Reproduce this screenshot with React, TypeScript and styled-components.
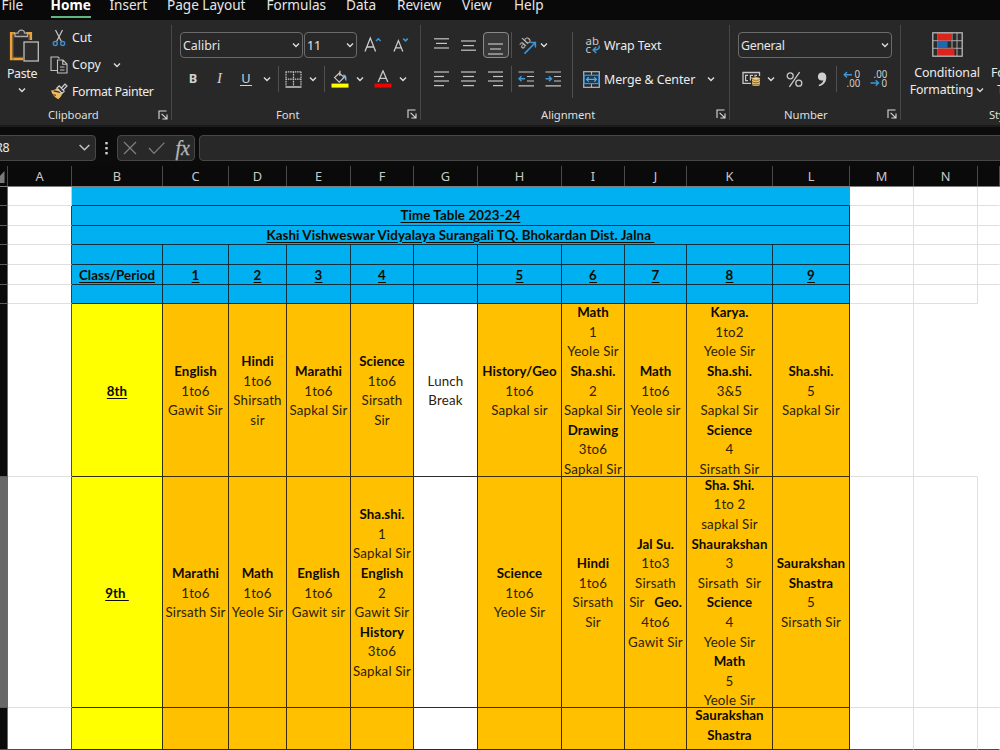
import React from 'react';
import styled, { createGlobalStyle } from 'styled-components';

const Global = createGlobalStyle`
  * { box-sizing: border-box; }
  html, body { margin: 0; padding: 0; background: #0a0a0a; overflow: hidden; }
`;

const ui = `"Noto Sans", "Open Sans", sans-serif`;
const sheet = `Lato, "Open Sans", sans-serif`;

const Window = styled.div`
  width: 1000px;
  height: 750px;
  overflow: hidden;
  display: flex;
  flex-direction: column;
  background: #0a0a0a;
  color: #ececec;
  font-family: ${ui};
`;

/* ---------- tabs ---------- */
const TabBar = styled.nav`
  display: flex;
  flex: none;
  height: 20px;
  background: #090909;
`;
const Tab = styled.div<{ $w: number; $ls?: number; $active?: boolean }>`
  width: ${p => p.$w}px;
  height: 18px;
  flex: none;
  white-space: nowrap;
  font-size: 13.6px;
  line-height: 20px;
  margin-top: -5px;
  letter-spacing: ${p => p.$ls ?? -0.02}px;
  font-weight: ${p => (p.$active ? 700 : 400)};
  color: ${p => (p.$active ? '#ffffff' : '#e6e6e6')};
  span { display: inline-block; height: 23px; border-bottom: ${p => (p.$active ? '2px solid #5fb884' : '0')}; }
`;

/* ---------- ribbon ---------- */
const Ribbon = styled.div`
  display: flex;
  flex: none;
  height: 106px;
  background: #282828;
  border-bottom: 1px solid #1a1a1a;
  overflow: hidden;
`;
const Group = styled.section<{ $w: number; $pl?: number }>`
  flex: none;
  width: ${p => p.$w}px;
  padding: 12px 0 0 ${p => p.$pl ?? 0}px;
  display: flex;
  flex-direction: column;
`;
const GroupEdge = styled.i`
  flex: none;
  width: 1px;
  height: 95px;
  margin-top: 5px;
  background: #484848;
`;
const Row = styled.div`
  display: flex;
  align-items: center;
  height: 26px;
  margin-bottom: 8px;
  flex: none;
`;
const Slot = styled.div<{ $w: number; $h?: number }>`
  width: ${p => p.$w}px;
  flex: none;
  height: ${p => p.$h ?? 26}px;
  display: flex;
  align-items: center;
  justify-content: center;
`;
const Gap = styled.div<{ $w?: number; $h?: number }>`
  width: ${p => p.$w ?? 1}px;
  height: ${p => p.$h ?? 0}px;
  flex: none;
`;
const Bar = styled.i<{ $h?: number }>`
  width: 1px;
  height: ${p => p.$h ?? 26}px;
  background: #505050;
`;
const Footer = styled.div<{ $pl: number }>`
  display: flex;
  justify-content: space-between;
  align-items: center;
  height: 18px;
  margin-top: auto;
  margin-bottom: 2px;
  padding: 0 3px 0 ${p => p.$pl}px;
  font-size: 11.3px;
  letter-spacing: -0.08px;
  color: #dedede;
`;
const Select = styled.div<{ $w: number; $ls?: number }>`
  width: ${p => p.$w}px;
  height: 26px;
  flex: none;
  border: 1px solid #6a6a6a;
  border-radius: 4px;
  padding: 0 2px 0 2px;
  display: flex;
  align-items: center;
  justify-content: space-between;
  font-size: 12.4px;
  letter-spacing: ${p => p.$ls ?? 0}px;
  color: #e4e4e4;
`;
const Text = styled.span<{ $s?: number; $ls?: number }>`
  font-size: ${p => p.$s ?? 12.4}px;
  letter-spacing: ${p => p.$ls ?? -0.1}px;
  white-space: pre;
  line-height: 17px;
`;
const Mark = styled.span<{ $bold?: boolean; $italic?: boolean; $under?: boolean }>`
  font-family: ${p => (p.$italic ? '"Liberation Serif", serif' : ui)};
  font-size: ${p => (p.$italic ? 15 : 12.8)}px;
  font-weight: ${p => (p.$bold ? 700 : 400)};
  font-style: ${p => (p.$italic ? 'italic' : 'normal')};
  line-height: 13px;
  color: #d2d2d2;
  margin-top: -1px;
  padding: 0 1px;
  border-bottom: ${p => (p.$under ? '1px solid #d2d2d2' : '0')};
`;
const Pressed = styled.div`
  width: 26px;
  height: 26px;
  flex: none;
  border: 1px solid #8a8a8a;
  border-radius: 4px;
  background: #383838;
  display: flex;
  align-items: center;
  justify-content: center;
  padding-top: 5px;
`;
const ClipRow = styled.div`
  display: flex;
  height: 82px;
`;
const PasteButton = styled.div`
  width: 44px;
  display: flex;
  flex-direction: column;
  align-items: center;
  svg { flex: none; }
`;
const PasteArt = styled.div`
  height: 34px;
  margin: -3px 0 2px 4px;
`;
const ClipList = styled.div`
  display: flex;
  flex-direction: column;
  padding: 0 0 0 6px;
  margin-top: -8px;
`;
const ClipItem = styled.div`
  height: 27px;
  display: flex;
  align-items: center;
  gap: 4px;
`;
const AlignBody = styled.div`
  display: flex;
  height: 68px;
`;
const Col = styled.div`
  display: flex;
  flex-direction: column;
  align-items: flex-start;
`;
const CondButton = styled.div`
  width: 74px;
  margin-left: 9px;
  display: flex;
  flex-direction: column;
  align-items: center;
`;
const FormatTable = styled.div`
  display: flex;
  flex-direction: column;
  padding-left: 7px;
`;
const StyleArea = styled.div`
  display: flex;
  height: 68px;
`;

const Chevron = ({ s = 8, c = '#dcdcdc', w = 1.4 }: { s?: number; c?: string; w?: number }) => (
  <svg width={s} height={s} viewBox="0 0 8 8" fill="none" stroke={c} strokeWidth={w}>
    <path d="M1 2.4 L4 5.4 L7 2.4" />
  </svg>
);
const Launcher = () => (
  <svg width="10" height="10" viewBox="0 0 10 10" fill="none" stroke="#dcdcdc" strokeWidth="1.1">
    <path d="M8.5 1 H1 V9 M3.6 3.8 L8.6 8.6 M9 4.4 V9 H4.4" />
  </svg>
);
const Lines = ({ rows, w = 16, h = 15 }: { rows: number[][]; w?: number; h?: number }) => (
  <svg width={w} height={h} viewBox={`0 0 ${w} ${h}`} stroke="#c4c4c4" strokeWidth="1.2">
    {rows.map(([x1, x2, y], i) => <line key={i} x1={x1} x2={x2} y1={y} y2={y} />)}
  </svg>
);
const PasteIcon = () => (
  <svg width="32" height="34" viewBox="0 0 32 34" fill="none">
    <path d="M7 4.2 H3.2 V30 H15" stroke="#e9a23c" strokeWidth="2.6" />
    <path d="M18 4.2 H22.8 V11" stroke="#e9a23c" strokeWidth="2.6" />
    <path d="M5 3.5 V31 M4.6 28.3 H15 M21 6 V11" stroke="#8a6a38" strokeWidth=".8" />
    <path d="M7 7.5 V4.2 H10 C10 .2 16.5 .2 16.5 4.2 H19.5 V7.5 Z" fill="#333" stroke="#a9a9a9" strokeWidth="1.3" />
    <rect x="16" y="13" width="14.3" height="19" fill="#2c2c2c" stroke="#bdbdbd" strokeWidth="1.3" />
  </svg>
);
const CutIcon = () => (
  <svg width="18" height="18" viewBox="0 0 18 18" fill="none">
    <path d="M5.5 1 L11.4 12.6 M12.5 1 L6.6 12.6" stroke="#c8c8c8" strokeWidth="1.2" />
    <circle cx="5.3" cy="14.5" r="2" stroke="#3b8ed0" strokeWidth="1.4" />
    <circle cx="12.7" cy="14.5" r="2" stroke="#3b8ed0" strokeWidth="1.4" />
  </svg>
);
const CopyIcon = () => (
  <svg width="18" height="18" viewBox="0 0 18 18" fill="none" stroke="#c0c0c0" strokeWidth="1.1">
    <path d="M7 14.5 H1 V1 H8 L9.5 2.5" />
    <path d="M7.5 4 H13 L17 8 V17 H7.5 Z M12.7 4.2 V8.2 H17 M10 11 H14.5 M10 14 H14.5" />
  </svg>
);
const PainterIcon = () => (
  <svg width="18" height="17" viewBox="0 0 18 17" fill="none">
    <path d="M1 7.5 C3.5 7.5 5.5 6.5 7 5 L12.3 10.5 C11.5 13 10.3 14.8 8.2 16.2 C5 14.5 2 11.5 1 7.5 Z" fill="#edb95c" />
    <path d="M3.6 7.9 L10.5 9.4" stroke="#282828" strokeWidth="1.1" />
    <path d="M3.4 11.6 L6 12.4" stroke="#282828" strokeWidth=".9" />
    <path d="M7 5 L9.2 2.8 L14.2 8.3 L12 10.5 Z M11.4 5 L15 1 L17 3 L13.2 6.8" stroke="#d0d0d0" strokeWidth="1.2" fill="#282828" />
  </svg>
);
const GrowIcon = ({ up }: { up?: boolean }) => (
  <svg width="18" height="18" viewBox="0 0 18 18" fill="none">
    {up
      ? <><path d="M1 15.4 L6.3 2 L11.6 15.4 M2.8 11 H9.8" stroke="#cacaca" strokeWidth="1.3" /><path d="M12 5 L14.3 2.7 L16.6 5" stroke="#3b97d8" strokeWidth="1.5" /></>
      : <><path d="M2 15.4 L6.4 4.6 L10.8 15.4 M3.5 11.8 H9.3" stroke="#cacaca" strokeWidth="1.3" /><path d="M11.2 2.6 L13.5 4.9 L15.8 2.6" stroke="#3b97d8" strokeWidth="1.5" /></>}
  </svg>
);
const BordersIcon = () => (
  <svg width="17" height="17" viewBox="0 0 17 17" fill="none" stroke="#c8c8c8">
    <path d="M.6 .8 H16.4 M.6 8.2 H16.4 M1 .8 V15 M8.5 .8 V15 M16 .8 V15" strokeDasharray="1.5 .8" strokeWidth="1.2" />
    <path d="M.5 16 H16.5" strokeWidth="1.5" />
  </svg>
);
const FillIcon = () => (
  <svg width="18" height="18" viewBox="0 0 18 18" fill="none">
    <path d="M8 2.6 L13 7.4 L8.2 12.2 L3.6 7.6 L9 2.4 V.8 M8.8 2 V6" stroke="#c8c8c8" strokeWidth="1.2" />
    <path d="M12 4.5 C15.8 4.5 15.8 8 15.3 11.6 C13.6 9.6 14 7.5 12.5 6.5 Z" fill="#7db5e0" />
    <rect x=".5" y="13.6" width="17" height="4" fill="#ffff00" />
  </svg>
);
const FontColorIcon = () => (
  <svg width="18" height="18" viewBox="0 0 18 18" fill="none">
    <path d="M4.2 12 L9 .8 L13.8 12 M5.8 8.4 H12.2" stroke="#c8c8c8" strokeWidth="1.3" />
    <rect x=".5" y="13.6" width="17" height="4" fill="#f00000" />
  </svg>
);
const OrientIcon = () => (
  <svg width="20" height="20" viewBox="0 0 20 20" fill="none">
    <text x="0" y="0" transform="translate(5.6 14.4) rotate(-45)" fontFamily="Noto Sans" fontSize="11" fill="#c8c8c8">ab</text>
    <path d="M7.5 18.6 L18 8 M13.4 7.6 H18.4 V12.6" stroke="#3b97d8" strokeWidth="1.5" />
  </svg>
);
const WrapIcon = () => (
  <svg width="16" height="20" viewBox="0 0 16 20" fill="none">
    <text x="0.5" y="10" fontFamily="Noto Sans" fontSize="11.4" fill="#c8c8c8">ab</text>
    <text x="0.5" y="18" fontFamily="Noto Sans" fontSize="11.4" fill="#c8c8c8">c</text>
    <path d="M14 10.6 C15 13.6 13 15 8.5 15 M11.2 12 L8.2 15 L11.2 18" stroke="#3b97d8" strokeWidth="1.5" />
  </svg>
);
const MergeIcon = () => (
  <svg width="17" height="17" viewBox="0 0 17 17" fill="none">
    <rect x=".7" y=".7" width="15.6" height="15.6" stroke="#b8b8b8" strokeWidth="1.2" />
    <path d="M8.5 1 V4 M8.5 13 V16" stroke="#b8b8b8" strokeWidth="1.1" />
    <rect x="1.2" y="4.2" width="14.6" height="8.4" fill="#1c3a52" stroke="#3b97d8" strokeWidth="1.2" />
    <path d="M3.5 8.4 H13.5 M5.8 6.2 L3.6 8.4 L5.8 10.6 M11.2 6.2 L13.4 8.4 L11.2 10.6" stroke="#56aee8" strokeWidth="1.2" />
  </svg>
);
const IndentIcon = ({ right }: { right?: boolean }) => (
  <svg width="17" height="16" viewBox="0 0 17 16" fill="none">
    <path d="M.5 1 H16 M9 5.5 H16 M9 10 H16 M.5 14.8 H16" stroke="#c4c4c4" strokeWidth="1.2" />
    <path d={right ? 'M.5 7.8 H6.5 M4 5.3 L6.5 7.8 L4 10.3' : 'M1 7.8 H7 M3.5 5.3 L1 7.8 L3.5 10.3'} stroke="#3b97d8" strokeWidth="1.5" />
  </svg>
);
const MoneyIcon = () => (
  <svg width="19" height="16" viewBox="0 0 19 16" fill="none">
    <path d="M9 12.4 H1 V1.5 H17.5 V5" stroke="#c8c8c8" strokeWidth="1.3" />
    <path d="M6 4.4 H3.6 V9.6 H6 M11 4.4 H8.4 V9.6 M8.4 7 H10.5 M13 6 V4.4 H15" stroke="#c8c8c8" strokeWidth="1.2" />
    <path d="M10 7.8 V13.4 C10 15.6 18 15.6 18 13.4 V7.8 Z" fill="#e8be6c" />
    <ellipse cx="14" cy="7.6" rx="4" ry="1.7" fill="#f1d596" stroke="#5a451c" strokeWidth=".6" />
    <path d="M10 10.5 C11 12.2 17 12.2 18 10.5 M10 13 C11 14.2 17 14.2 18 13" stroke="#6a5220" strokeWidth=".8" />
  </svg>
);
const PercentIcon = () => (
  <svg width="17" height="17" viewBox="0 0 17 17" fill="none" stroke="#c8c8c8" strokeWidth="1.3">
    <circle cx="4.2" cy="4.8" r="3" /><circle cx="12.8" cy="12.2" r="3" /><path d="M13.6 1.2 L3.4 15.8" />
  </svg>
);
const CommaIcon = () => (
  <svg width="10" height="15" viewBox="0 0 10 15">
    <path d="M5 .6 C8 .6 9.3 2.8 9.3 5.4 C9.3 9.8 6.6 13 2.2 14.2 L1.6 13 C4.4 12 6 10.4 6.3 8.3 C3.2 9.3 .9 7.3 .9 4.7 C.9 2.2 2.6 .6 5 .6 Z" fill="#cfcfcf" />
  </svg>
);
const DecimalIcon = ({ more }: { more?: boolean }) => (
  <svg width="18" height="20" viewBox="0 0 18 20" fill="none">
    <g fontFamily="Noto Sans" fontSize="11" fill="#cfcfcf">
      {more
        ? <><text x="11.6" y="9" textLength="5.6" lengthAdjust="spacingAndGlyphs">0</text><text x="3.6" y="18.2" textLength="13.6" lengthAdjust="spacingAndGlyphs">.00</text></>
        : <><text x="3.6" y="9" textLength="13.6" lengthAdjust="spacingAndGlyphs">.00</text><text x="11.6" y="18.2" textLength="5.6" lengthAdjust="spacingAndGlyphs">0</text></>}
    </g>
    <path d={more ? 'M1.2 5.8 H9 M4 3 L1.2 5.8 L4 8.6' : 'M.5 14 H8.5 M5.7 11.2 L8.5 14 L5.7 16.8'} stroke="#3b97d8" strokeWidth="1.4" />
  </svg>
);
const CondIcon = () => (
  <svg width="31" height="25" viewBox="0 0 31 25">
    <rect x="1" y="1" width="29" height="23" fill="#2b2b2b" />
    <path d="M20 1 V24 M25 1 V24 M6 1 V24 M1 8.7 H30 M1 16.3 H30" stroke="#a8a8a8" strokeWidth="1" />
    <rect x="6" y="1" width="13.5" height="7.4" fill="#dc241c" />
    <rect x="6" y="9" width="9.5" height="7" fill="#1c68b4" />
    <rect x="6" y="16.6" width="16.5" height="7.4" fill="#dc241c" />
    <rect x=".8" y=".8" width="29.4" height="23.4" fill="none" stroke="#c4c4c4" strokeWidth="1.2" />
  </svg>
);

/* ---------- formula bar ---------- */
const FormulaBar = styled.div`
  display: flex;
  flex: none;
  height: 40px;
  padding-top: 8px;
  background: #0b0b0b;
  border-top: 1px solid #1c1c1c;
  overflow: hidden;
`;
const Field = styled.div<{ $w: number; $ml: number; $pl?: number }>`
  flex: none;
  width: ${p => p.$w}px;
  height: 26px;
  margin-left: ${p => p.$ml}px;
  background: #282828;
  border: 1px solid #474747;
  border-radius: 4px;
  display: flex;
  align-items: center;
  justify-content: space-between;
  padding: 0 4px 1px ${p => p.$pl ?? 5}px;
  font-size: 12.4px;
`;
const Dots = styled.div`
  width: 22px;
  height: 25px;
  display: flex;
  flex: none;
  align-items: center;
  justify-content: center;
`;
const Fx = styled.span`
  font-family: "Liberation Serif", serif;
  font-style: italic;
  font-size: 20px;
  line-height: 20px;
  color: #b4b4b4;
  -webkit-text-stroke: 0.3px #b4b4b4;
`;

/* ---------- sheet ---------- */
const columns = [8, 64, 91, 66, 58, 64, 63, 64, 84, 63, 62, 86, 77, 64, 64, 22];
const template = columns.map(c => `${c}px`).join(' ');

const Heads = styled.div`
  display: grid;
  flex: none;
  grid-template-columns: ${template};
  height: 21px;
  border-bottom: 1px solid #7c7c7c;
`;
const Head = styled.div`
  border-right: 1px solid #4a4a4a;
  font-size: 12.8px;
  line-height: 19px;
  height: 20px;
  text-align: center;
  color: #c8c8c8;
  display: flex;
  justify-content: center;
  align-items: flex-end;
  overflow: hidden;
  svg { margin-bottom: 1px; }
`;
const Grid = styled.div`
  display: grid;
  flex: none;
  grid-template-columns: ${template};
  grid-template-rows: 19px 20px 19px 20px 20px 19px 173px 231px 42px;
`;

type Tone = 'blank' | 'blue' | 'yellow' | 'orange' | 'white' | 'gutter' | 'picked';
const fills: Record<Tone, string> = {
  blank: '#ffffff', blue: '#00b0f0', yellow: '#ffff00', orange: '#ffc000', white: '#ffffff', gutter: '#0a0a0a', picked: '#686868',
};
const edges: Record<Tone, string> = {
  blank: '#dfdfdf', blue: '#08303f', yellow: '#2d2d00', orange: '#3a2c00', white: '#2c2c2c', gutter: '#4d4d4d', picked: '#2f8a5c',
};
const Cell = styled.div<{ $tone: Tone; $span?: number; $right?: string; $bottom?: string; $top?: boolean }>`
  grid-column: span ${p => p.$span ?? 1};
  background: ${p => fills[p.$tone]};
  border-right: 1px solid ${p => p.$right ?? edges[p.$tone]};
  border-bottom: 1px solid ${p => p.$bottom ?? edges[p.$tone]};
  display: flex;
  flex-direction: column;
  align-items: center;
  justify-content: ${p => (p.$top ? 'flex-start' : 'center')};
  overflow: hidden;
  min-width: 0;
  min-height: 0;
  padding-top: ${p => (p.$tone === 'blue' ? (p.$span ? 1 : 2) : 2.7)}px;
  padding-right: ${p => (p.$span ? 0.2 : 0)}px;
`;
const Line = styled.div<{ $bold?: boolean; $under?: boolean; $ls?: number; $lift?: boolean }>`
  flex: none;
  font-family: ${sheet};
  font-size: 13.3px;
  line-height: 19.6px;
  white-space: pre;
  letter-spacing: ${p => p.$ls ?? (p.$bold ? 0.06 : 0.17)}px;
  font-weight: ${p => (p.$bold ? 700 : 400)};
  color: ${p => (p.$bold ? '#0d0a00' : '#2c2208')};
  text-decoration: ${p => (p.$under ? 'underline' : 'none')};
  text-underline-offset: 2px;
  margin-top: ${p => (p.$lift ? -4.7 : 0)}px;
`;
const Strong = styled.b`
  color: #0d0a00;
`;

/* A leading asterisk marks a bold line. */
const eighth = [
  ['*English', '1to6', 'Gawit Sir'],
  ['*Hindi', '1to6', 'Shirsath', 'sir'],
  ['*Marathi', '1to6', 'Sapkal Sir'],
  ['*Science', '1to6', 'Sirsath', 'Sir'],
  ['Lunch', 'Break'],
  ['*History/Geo', '1to6', 'Sapkal sir'],
  ['*Math', '1', 'Yeole Sir', '*Sha.shi.', '2', 'Sapkal Sir', '*Drawing', '3to6', 'Sapkal Sir'],
  ['*Math', '1to6', 'Yeole sir'],
  ['*Karya.', '1to2', 'Yeole Sir', '*Sha.shi.', '3&5', 'Sapkal Sir', '*Science', '4', 'Sirsath Sir'],
  ['*Sha.shi.', '5', 'Sapkal Sir'],
];
const ninth = [
  ['*Marathi', '1to6', 'Sirsath Sir'],
  ['*Math', '1to6', 'Yeole Sir'],
  ['*English', '1to6', 'Gawit sir'],
  ['*Sha.shi.', '1', 'Sapkal Sir', '*English', '2', 'Gawit Sir', '*History', '3to6', 'Sapkal Sir'],
  [],
  ['*Science', '1to6', 'Yeole Sir'],
  ['*Hindi', '1to6', 'Sirsath', 'Sir'],
  ['*Jal Su.', '1to3', 'Sirsath', 'Sir   *Geo.', '4to6', 'Gawit Sir'],
  ['*Sha. Shi.', '1to 2', 'sapkal Sir', '*Shaurakshan', '3', 'Sirsath  Sir', '*Science', '4', 'Yeole Sir', '*Math', '5', 'Yeole Sir'],
  ['*Saurakshan', '*Shastra', '5', 'Sirsath Sir'],
];
const tenth = [[], [], [], [], [], [], [], [], ['*Saurakshan', '*Shastra'], []];

const Lesson = ({ text, lift }: { text: string; lift?: boolean }) => {
  const at = text.indexOf('*');
  if (at > 0) return <Line $ls={0}>{text.slice(0, at)}<Strong>{text.slice(at + 1)}</Strong></Line>;
  return <Line $bold={at === 0} $lift={lift}>{text.replace('*', '')}</Line>;
};

const Tail = ({ last = '#dfdfdf', under = '#dfdfdf', rule }: { last?: string; under?: string; rule?: string }) => (
  <>
    <Cell $tone="blank" $bottom={rule} />
    <Cell $tone="blank" $right={last} $bottom={rule} />
    <Cell $tone="blank" $right="#ffffff" $bottom={rule ?? under} />
  </>
);
const Start = ({ picked, edge, rule }: { picked?: boolean; edge: string; rule?: string }) => (
  <>
    <Cell $tone={picked ? 'picked' : 'gutter'} $right={picked ? '#2f8a5c' : '#6a6a6a'} $bottom={rule ?? '#5c5c5c'} />
    <Cell $tone="blank" $right={edge} $bottom={rule} />
  </>
);
type LessonRowProps = { name: string; cells: string[][]; picked?: boolean; top?: boolean; last?: string; under?: string; rule?: string };
const LessonRow = ({ name, cells, picked, top, last, under, rule }: LessonRowProps) => (
  <>
    <Start picked={picked} edge="#55551a" rule={rule} />
    <Cell $tone="yellow">{name && <Line $bold $under>{name}</Line>}</Cell>
    {cells.map((lines, i) => (
      <Cell key={i} $tone={i === 4 ? 'white' : 'orange'} $top={top}>
        {lines.map((t, n) => <Lesson key={n} text={t} lift={top && n === 0} />)}
      </Cell>
    ))}
    <Tail last={last} under={under} rule={rule} />
  </>
);
const BlueRow = ({ labels }: { labels: string[] }) => (
  <>
    <Start edge="#0c4a60" />
    {labels.map((t, i) => <Cell key={i} $tone="blue">{t && <Line $bold $under>{t}</Line>}</Cell>)}
    <Tail />
  </>
);
const empty = Array(11).fill('');

export default function App() {
  return (
    <Window>
      <Global />
      <TabBar>
        <Gap $w={1.5} />
        <Tab $w={49}>File</Tab>
        <Tab $w={59} $active $ls={0}><span>Home</span></Tab>
        <Tab $w={57.5}>Insert</Tab>
        <Tab $w={99.5}>Page Layout</Tab>
        <Tab $w={79.5}>Formulas</Tab>
        <Tab $w={51}>Data</Tab>
        <Tab $w={65}>Review</Tab>
        <Tab $w={52}>View</Tab>
        <Tab $w={50}>Help</Tab>
      </TabBar>

      <Ribbon>
        <Group $w={171}>
          <ClipRow>
            <PasteButton>
              <PasteArt><PasteIcon /></PasteArt>
              <Text $ls={-0.35}>Paste</Text>
              <Gap $h={4} />
              <Chevron />
            </PasteButton>
            <ClipList>
              <ClipItem><CutIcon /><Text>Cut</Text></ClipItem>
              <ClipItem><CopyIcon /><Text $ls={-0.1}>Copy</Text><Gap $w={4} /><Chevron /></ClipItem>
              <ClipItem><PainterIcon /><Text $ls={-0.4}>Format Painter</Text></ClipItem>
            </ClipList>
          </ClipRow>
          <Footer $pl={48}>Clipboard<Launcher /></Footer>
        </Group>
        <GroupEdge />

        <Group $w={248} $pl={8}>
          <Row>
            <Select $w={123}>Calibri<Chevron /></Select>
            <Gap $w={1} />
            <Select $w={53}>11<Chevron /></Select>
            <Gap $w={6} />
            <Slot $w={20}><GrowIcon up /></Slot>
            <Gap $w={8} />
            <Slot $w={20}><GrowIcon /></Slot>
          </Row>
          <Row>
            <Slot $w={26}><Mark $bold>B</Mark></Slot>
            <Slot $w={27}><Mark $italic>I</Mark></Slot>
            <Slot $w={26}><Mark $under>U</Mark></Slot>
            <Slot $w={16}><Chevron /></Slot>
            <Slot $w={6}><Bar /></Slot>
            <Slot $w={24}><BordersIcon /></Slot>
            <Slot $w={16}><Chevron /></Slot>
            <Slot $w={6}><Bar /></Slot>
            <Slot $w={25}><FillIcon /></Slot>
            <Slot $w={15}><Chevron /></Slot>
            <Slot $w={31}><FontColorIcon /></Slot>
            <Slot $w={9}><Chevron /></Slot>
          </Row>
          <Footer $pl={96}>Font<Launcher /></Footer>
        </Group>
        <GroupEdge />

        <Group $w={308} $pl={7}>
          <AlignBody>
            <Col>
              <Row>
                <Slot $w={27}><Lines rows={[[0, 15, 0.8], [2, 13, 5.4], [0, 15, 10]]} /></Slot>
                <Slot $w={27}><Lines rows={[[0, 15, 3], [2, 13, 7.6], [0, 15, 12.2]]} /></Slot>
                <Slot $w={27}><Pressed><Lines rows={[[0, 15, 4], [2, 13, 9], [0, 15, 14]]} /></Pressed></Slot>
                <Slot $w={4}><Bar /></Slot>
                <Slot $w={27}><OrientIcon /></Slot>
                <Slot $w={8}><Chevron /></Slot>
              </Row>
              <Row>
                <Slot $w={27}><Lines h={16} rows={[[0, 15, 1], [0, 10, 5.5], [0, 15, 10], [0, 10, 14.6]]} /></Slot>
                <Slot $w={27}><Lines h={16} rows={[[0, 15, 1], [2, 13, 5.5], [0, 15, 10], [2, 13, 14.6]]} /></Slot>
                <Slot $w={27}><Lines h={16} rows={[[0, 15, 1], [5, 15, 5.5], [0, 15, 10], [5, 15, 14.6]]} /></Slot>
                <Slot $w={4}><Bar /></Slot>
                <Slot $w={26}><IndentIcon /></Slot>
                <Slot $w={28}><IndentIcon right /></Slot>
              </Row>
            </Col>
            <Slot $w={10} $h={66}><Bar $h={66} /></Slot>
            <div>
              <Row>
                <Gap $w={7} />
                <Slot $w={18}><WrapIcon /></Slot>
                <Gap $w={2} />
                <Text $ls={-0.05}>Wrap Text</Text>
              </Row>
              <Row>
                <Gap $w={5} />
                <Slot $w={18}><MergeIcon /></Slot>
                <Gap $w={4} />
                <Text $ls={-0.08}>Merge &amp; Center</Text>
                <Gap $w={12} />
                <Chevron />
              </Row>
            </div>
          </AlignBody>
          <Footer $pl={113}>Alignment<Launcher /></Footer>
        </Group>
        <GroupEdge />

        <Group $w={170} $pl={8}>
          <Row>
            <Select $w={154} $ls={-0.3}>General<Chevron /></Select>
          </Row>
          <Row>
            <Slot $w={26}><MoneyIcon /></Slot>
            <Slot $w={13}><Chevron /></Slot>
            <Slot $w={34}><PercentIcon /></Slot>
            <Slot $w={21}><CommaIcon /></Slot>
            <Slot $w={8}><Bar /></Slot>
            <Slot $w={23}><DecimalIcon more /></Slot>
            <Slot $w={31}><DecimalIcon /></Slot>
          </Row>
          <Footer $pl={46}>Number<Launcher /></Footer>
        </Group>
        <GroupEdge />

        <Group $w={140}>
          <StyleArea>
            <CondButton>
              <CondIcon />
              <Gap $h={7} />
              <Text $ls={-0.1}>Conditional</Text>
              <Text $ls={-0.15}>Formatting <Chevron /></Text>
            </CondButton>
            <FormatTable>
              <Gap $h={32} />
              <Text>Format as</Text>
              <Text>{'  Table'}</Text>
            </FormatTable>
          </StyleArea>
          <Footer $pl={88}>Styles</Footer>
        </Group>
      </Ribbon>

      <FormulaBar>
        <Field $w={106} $ml={-10} $pl={4}>
          <Text>R8</Text>
          <Chevron s={13} c="#c4c4c4" w={0.9} />
        </Field>
        <Dots>
          <svg width="4" height="14" viewBox="0 0 4 14" fill="#d4d4d4">
            <rect x=".3" y="1" width="2.4" height="2.4" /><rect x=".3" y="6" width="2.4" height="2.4" /><rect x=".3" y="11" width="2.4" height="2.4" />
          </svg>
        </Dots>
        <Field $w={78} $ml={-1}>
          <svg width="14" height="14" viewBox="0 0 14 14" stroke="#808080" strokeWidth="1.2" fill="none"><path d="M1 1 L13 13 M13 1 L1 13" /></svg>
          <svg width="17" height="14" viewBox="0 0 17 14" stroke="#808080" strokeWidth="1.2" fill="none"><path d="M1 7 L6 12.4 L16.4 1.6" /></svg>
          <Fx>fx</Fx>
        </Field>
        <Field $w={820} $ml={4} />
      </FormulaBar>

      <Heads>
        <Head>
          <svg width="7" height="14" viewBox="0 0 7 14"><path d="M4.5 0 V12 H-7 Z" fill="#7a7a7a" /></svg>
        </Head>
        {'ABCDEFGHIJKLMNO'.split('').map((c, i) => <Head key={c}>{i < 14 ? c : ''}</Head>)}
      </Heads>

      <Grid>
        <Start edge="#9fe0f5" />
        <Cell $tone="blue" $span={11} $right="#00b0f0" />
        <Tail />
        <Start edge="#0c4a60" />
        <Cell $tone="blue" $span={11}><Line $bold $under $ls={0.1}>Time Table 2023-24</Line></Cell>
        <Tail />
        <Start edge="#0c4a60" />
        <Cell $tone="blue" $span={11}><Line $bold $under $ls={0.09}>{'Kashi Vishweswar Vidyalaya Surangali TQ. Bhokardan Dist. Jalna '}</Line></Cell>
        <Tail />
        <BlueRow labels={empty} />
        <BlueRow labels={['Class/Period', '1', '2', '3', '4', '', '5', '6', '7', '8', '9']} />
        <Start edge="#0c4a60" />
        {empty.map((_, i) => <Cell key={i} $tone="blue" />)}
        <Tail under="#ffffff" />
        <LessonRow name="8th" cells={eighth} last="#ffffff" under="#ffffff" />
        <LessonRow name="9th " cells={ninth} picked />
        <LessonRow name="" cells={tenth} top rule="#4a4a4a" />
      </Grid>
    </Window>
  );
}
